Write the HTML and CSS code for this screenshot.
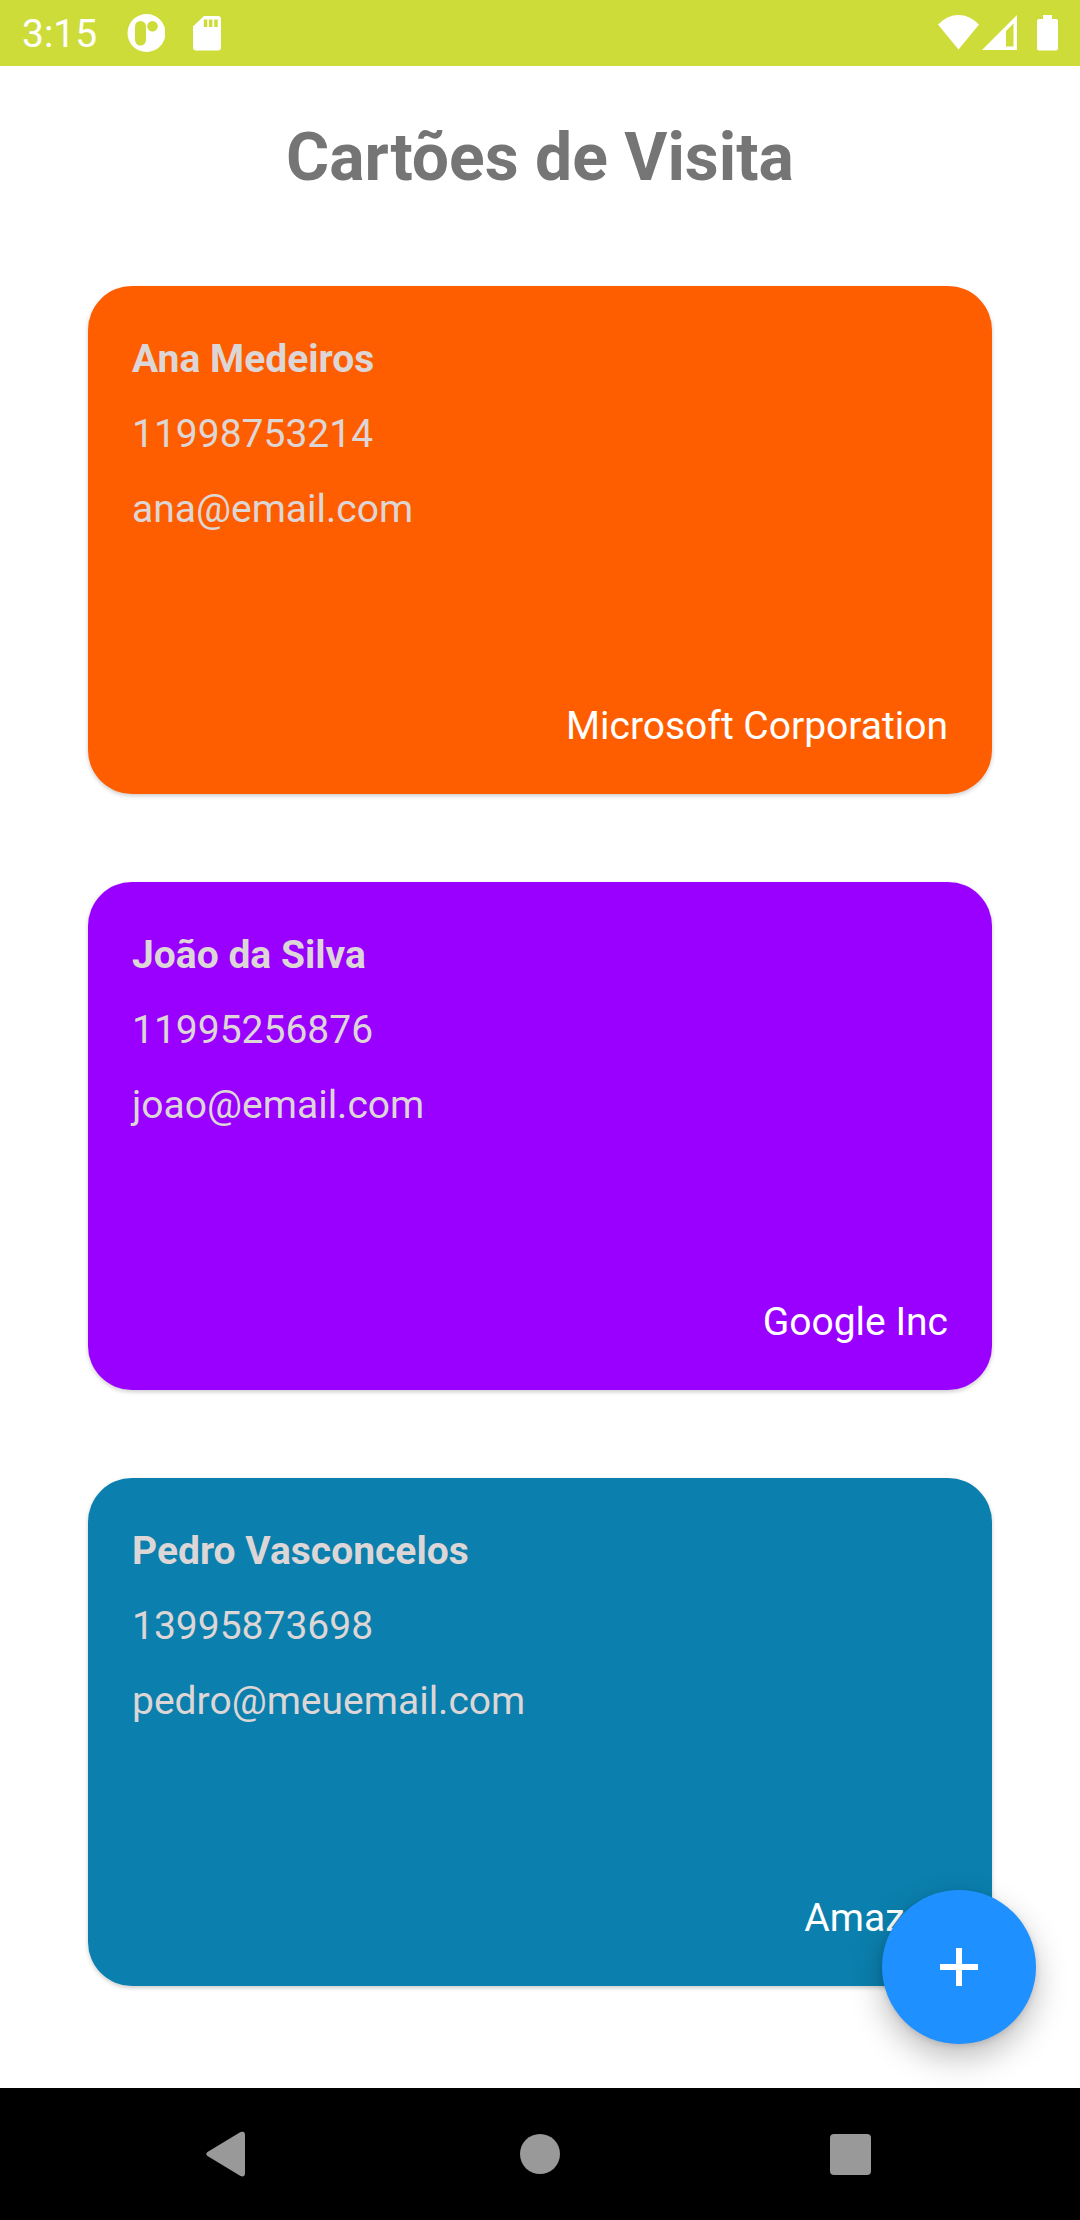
FILE: index.html
```html
<!DOCTYPE html>
<html lang="pt-BR">
<head>
  <meta charset="utf-8">
  <meta name="viewport" content="width=device-width, initial-scale=1">
  <title>Cartões de Visita</title>
  <link rel="stylesheet" href="styles.css">
</head>
<body>
  <header class="status-bar">
    <div class="status-left">
      <time class="clock">3:15</time>
      <svg class="icon" width="40" height="40" viewBox="0 0 40 40" aria-hidden="true">
        <path fill-rule="evenodd" d="M21.5 1a19 19 0 1 1 0 38a19 19 0 0 1 0-38zM15.5 8a5.500 5.500 0 0 0-5.500 5.500v13.500a5.500 5.500 0 0 0 11 0v-13.500a5.500 5.500 0 0 0-5.500-5.500zM27.500 8a5.300 5.300 0 1 0 0 10.600a5.300 5.300 0 0 0 0-10.600z"/>
      </svg>
      <svg class="icon" width="28" height="40" viewBox="0 0 28 40" aria-hidden="true">
        <path fill-rule="evenodd" d="M11 3h14a3 3 0 0 1 3 3v28.500a3 3 0 0 1-3 3h-22a3 3 0 0 1-3-3v-21zM10.800 6.500v7.500h3.500v-7.500zM15.900 6.500v7.500h3.500v-7.500zM21.200 6.500v7.500h3.500v-7.500z"/>
      </svg>
    </div>
    <div class="status-right">
      <svg class="icon" width="42" height="40" viewBox="0 0 42 40" aria-hidden="true">
        <path d="M1 11.500Q10 2 21.500 2T42 11.500L21.500 36.500z"/>
      </svg>
      <svg class="icon" width="36" height="40" viewBox="0 0 36 40" aria-hidden="true">
        <path fill-rule="evenodd" d="M1 37L36 2v35zM25 18v15.500h7.500v-23z"/>
      </svg>
      <svg class="icon" width="39" height="40" viewBox="0 0 39 40" aria-hidden="true">
        <path d="M24 2h9v4h4a2 2 0 0 1 2 2v27.500a2 2 0 0 1-2 2h-17a2 2 0 0 1-2-2v-27.500a2 2 0 0 1 2-2h4z"/>
      </svg>
    </div>
  </header>

  <main class="screen">
    <h1 class="title">Cartões de Visita</h1>
    <ul class="cards">
      <li class="card card-orange">
        <h2 class="name">Ana Medeiros</h2>
        <p class="detail">11998753214</p>
        <p class="detail">ana@email.com</p>
        <p class="company">Microsoft Corporation</p>
      </li>
      <li class="card card-purple">
        <h2 class="name">João da Silva</h2>
        <p class="detail">11995256876</p>
        <p class="detail">joao@email.com</p>
        <p class="company">Google Inc</p>
      </li>
      <li class="card card-blue">
        <h2 class="name">Pedro Vasconcelos</h2>
        <p class="detail">13995873698</p>
        <p class="detail">pedro@meuemail.com</p>
        <p class="company">Amazon</p>
      </li>
    </ul>
    <button class="fab" type="button" aria-label="Adicionar cartão">
      <svg width="40" height="40" viewBox="0 0 40 40" aria-hidden="true">
        <path d="M17 1h6v16h16v6h-16v16h-6v-16h-16v-6h16z"/>
      </svg>
    </button>
  </main>

  <nav class="nav-bar" aria-label="Sistema">
    <button class="nav-button" type="button" aria-label="Voltar">
      <svg width="48" height="48" viewBox="0 0 48 48" aria-hidden="true">
        <path d="M3.500 22L36.500 2Q41 .5 41 5v38Q41 47.500 36.500 46L3.500 26Q1 24 3.500 22z"/>
      </svg>
    </button>
    <button class="nav-button" type="button" aria-label="Início">
      <svg width="48" height="48" viewBox="0 0 48 48" aria-hidden="true">
        <circle cx="24" cy="24" r="20"/>
      </svg>
    </button>
    <button class="nav-button" type="button" aria-label="Recentes">
      <svg width="48" height="48" viewBox="0 0 48 48" aria-hidden="true">
        <rect x="2" y="4" width="41" height="41" rx="4"/>
      </svg>
    </button>
  </nav>
</body>
</html>
```

FILE: styles.css
```css
* {
  box-sizing: border-box;
  margin: 0;
  padding: 0;
}

body {
  display: flex;
  flex-direction: column;
  min-height: 100vh;
  background: #fff;
  font-family: Roboto, "Noto Sans", sans-serif;
  font-size: 39px;
  line-height: 46px;
}

button {
  border: 0;
  cursor: pointer;
}

.status-bar {
  display: flex;
  align-items: center;
  justify-content: space-between;
  height: 66px;
  padding: 0 22px;
  background: #cddc39;
  color: #fff;
}

.status-left,
.status-right {
  display: flex;
  align-items: center;
}

.status-left {
  gap: 28px;
}

.status-right {
  gap: 2px;
}

.clock {
  padding-top: 2px;
}

.icon {
  fill: #fff;
}

.screen {
  position: relative;
  flex: 1;
  padding: 53px 88px 102px;
}

.title {
  margin-bottom: 89px;
  color: #757575;
  font-size: 66px;
  line-height: 78px;
  text-align: center;
}

.cards {
  display: flex;
  flex-direction: column;
  gap: 88px;
  list-style: none;
}

.card {
  display: flex;
  flex-direction: column;
  gap: 29px;
  min-height: 508px;
  padding: 50px 44px 45px;
  border-radius: 44px;
  box-shadow: 0 2px 4px rgba(0, 0, 0, 0.2);
  color: #ddd6d6;
}

.card-orange {
  background: #ff5e00;
}

.card-purple {
  background: #9900ff;
}

.card-blue {
  background: #0b7fad;
}

.name {
  font-size: 39px;
  font-weight: 700;
}

.company {
  margin-top: auto;
  color: #fff;
  text-align: right;
}

.fab {
  position: absolute;
  right: 44px;
  bottom: 44px;
  display: grid;
  place-items: center;
  width: 154px;
  height: 154px;
  border-radius: 50%;
  background: #1e90ff;
  box-shadow: 0 14px 32px rgba(0, 0, 0, 0.26), 0 2px 6px rgba(0, 0, 0, 0.12);
  fill: #fff;
}

.nav-bar {
  display: flex;
  align-items: center;
  justify-content: center;
  gap: 180px;
  height: 132px;
  background: #000;
}

.nav-button {
  display: grid;
  place-items: center;
  width: 132px;
  height: 132px;
  background: none;
  fill: #999;
}
```
